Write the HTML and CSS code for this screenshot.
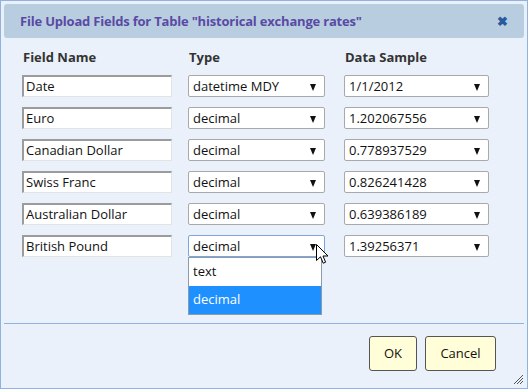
FILE: index.html
```html
<!DOCTYPE html>
<html>
<head>
  <title>File Upload Fields</title>
  <link rel="stylesheet" href="styles.css">
</head>
<body>
<div class="dialog">
  <div class="titlebar">
    <span class="title">File Upload Fields for Table "historical exchange rates"</span>
    <span class="close">&#10006;</span>
  </div>

  <div class="fields">
    <div class="head">Field Name</div>
    <div class="head">Type</div>
    <div class="head">Data Sample</div>

    <div class="textbox">Date</div>
    <div class="select typesel">datetime MDY<span class="caret"></span></div>
    <div class="select samplesel">1/1/2012<span class="caret"></span></div>

    <div class="textbox">Euro</div>
    <div class="select typesel">decimal<span class="caret"></span></div>
    <div class="select samplesel">1.202067556<span class="caret"></span></div>

    <div class="textbox">Canadian Dollar</div>
    <div class="select typesel">decimal<span class="caret"></span></div>
    <div class="select samplesel">0.778937529<span class="caret"></span></div>

    <div class="textbox">Swiss Franc</div>
    <div class="select typesel">decimal<span class="caret"></span></div>
    <div class="select samplesel">0.826241428<span class="caret"></span></div>

    <div class="textbox">Australian Dollar</div>
    <div class="select typesel">decimal<span class="caret"></span></div>
    <div class="select samplesel">0.639386189<span class="caret"></span></div>

    <div class="textbox">British Pound</div>
    <div class="select typesel open">decimal<span class="caret"></span>
      <div class="droplist">
        <div class="option">text</div>
        <div class="option selected">decimal</div>
      </div>
      <svg class="cursor" width="13" height="21" viewBox="0 0 13 21">
        <path d="M0.5 0.5 L0.5 16.5 L4.5 12.8 L7.2 19.2 L9.6 18.2 L7 12 L12 12 Z" fill="#fff" stroke="#000" stroke-width="1" stroke-linejoin="miter"/>
      </svg>
    </div>
    <div class="select samplesel">1.39256371<span class="caret"></span></div>
  </div>

  <div class="footer">
    <div class="button ok">OK</div>
    <div class="button cancel">Cancel</div>
  </div>

  <svg class="grip" width="12" height="12" viewBox="0 0 12 12">
    <path d="M11 2 L2 11 M11 5 L5 11 M11 8 L8 11" stroke="#555" stroke-width="1"/>
  </svg>
</div>
</body>
</html>
```

FILE: styles.css
```css
body {
    margin: 0;
    font-family: "Open Sans", "Noto Sans", Arial, sans-serif;
    font-size: 13px;
    color: #111;
}

.dialog {
    position: relative;
    box-sizing: border-box;
    width: 528px;
    height: 389px;
    border: 1px solid #8fb3e0;
    background: #eaf1fa;
    padding: 3px;
    display: flex;
    flex-direction: column;
}

.titlebar {
    height: 34px;
    background: #b8cee0;
    border-radius: 3px;
    display: flex;
    align-items: center;
    justify-content: space-between;
    padding: 0 16px 0 16px;
}

.title {
    color: #5a4aa3;
    font-weight: bold;
    font-size: 13px;
    letter-spacing: -0.2px;
}

.close {
    color: #2b5a9c;
    font-size: 13px;
    font-weight: bold;
}

.fields {
    display: grid;
    grid-template-columns: 150px 140px 145px;
    grid-template-rows: 16px repeat(6, 22px);
    column-gap: 16px;
    row-gap: 10px;
    padding: 11px 0 0 18px;
    height: 236px;
    box-sizing: border-box;
}

.head {
    font-weight: bold;
    color: #333;
    padding-left: 1px;
    line-height: 16px;
}

.textbox {
    box-sizing: border-box;
    height: 22px;
    background: #fff;
    border-top: 2px solid #9c9c9c;
    border-left: 2px solid #9c9c9c;
    border-right: 1px solid #e4e4e4;
    border-bottom: 1px solid #e4e4e4;
    padding-left: 2px;
    line-height: 19px;
}

.select {
    position: relative;
    box-sizing: border-box;
    height: 22px;
    background: #fff;
    border: 1px solid #a9a9a9;
    border-radius: 2px;
    padding-left: 4px;
    line-height: 20px;
}

.typesel {
    width: 137px;
}

.select.open {
    border-color: #7ea6d8;
}

.caret {
    position: absolute;
    right: 8px;
    top: 8px;
    width: 0;
    height: 0;
    border-left: 3.5px solid transparent;
    border-right: 3.5px solid transparent;
    border-top: 7px solid #111;
}

.droplist {
    position: absolute;
    left: -1px;
    top: 21px;
    width: 134px;
    box-sizing: border-box;
    background: #fff;
    border: 1px solid #8e9aab;
    z-index: 2;
}

.option {
    height: 28px;
    line-height: 26px;
    padding-left: 4px;
}

.option.selected {
    background: #1e90ff;
    color: #fff;
}

.cursor {
    position: absolute;
    left: 127px;
    top: 8px;
    z-index: 3;
}

.footer {
    margin-top: 49px;
    border-top: 1px solid #8fb3e0;
    display: flex;
    justify-content: flex-end;
    gap: 8px;
    padding: 12px 28px 0 0;
}

.button {
    box-sizing: border-box;
    height: 35px;
    background: #fffed8;
    border: 1px solid #555;
    border-radius: 3px;
    line-height: 33px;
    color: #111;
    text-align: center;
}

.button.ok {
    width: 48px;
}

.button.cancel {
    width: 71px;
}

.grip {
    position: absolute;
    right: 3px;
    bottom: 3px;
}
```
